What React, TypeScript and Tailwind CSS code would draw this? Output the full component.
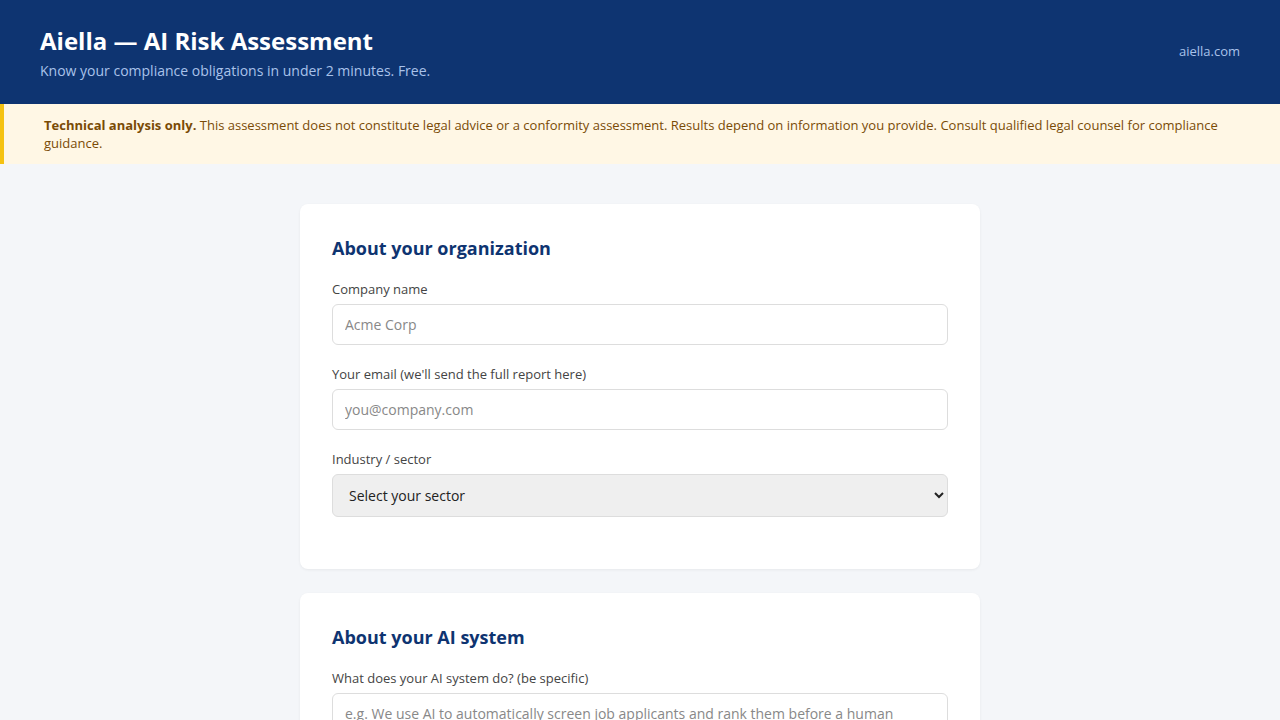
export default function App() {
  return (
    <div className="min-h-screen bg-[#f4f6f9] font-['Open_Sans',sans-serif]">
      <header className="flex items-center justify-between bg-[#0e3471] px-10 h-[104px]">
        <div className="pt-[2px]">
          <h1 className="text-[24px] font-bold leading-8 text-white">Aiella — AI Risk Assessment</h1>
          <p className="mt-1 text-[14px] leading-5 text-[#a9c2ea]">
            Know your compliance obligations in under 2 minutes. Free.
          </p>
        </div>
        <span className="text-[13px] text-[#a9c2ea]">aiella.com</span>
      </header>

      <div className="border-l-4 border-[#f5c211] bg-[#fff7e5] px-10 py-3 text-[13px] leading-[18px] text-[#7a4b06]">
        <strong className="font-bold">Technical analysis only.</strong> This assessment does not constitute legal
        advice or a conformity assessment. Results depend on information you provide. Consult qualified legal counsel
        for compliance guidance.
      </div>

      <main className="mx-auto w-[680px] pt-10 pb-10 space-y-6">
        <section className="rounded-lg bg-white p-8 shadow-[0_1px_3px_rgba(0,0,0,0.06)]">
          <h2 className="mb-5 text-[18px] font-bold leading-6 text-[#0e3471]">About your organization</h2>

          <div className="mb-5">
            <label className="mb-1.5 block text-[13px] leading-[18px] text-[#444]">Company name</label>
            <input
              className="block h-[41px] w-full rounded-md border border-[#dddddd] bg-white px-3 text-[14px] text-[#222] placeholder:text-[#888] outline-none"
              placeholder="Acme Corp"
            />
          </div>

          <div className="mb-5">
            <label className="mb-1.5 block text-[13px] leading-[18px] text-[#444]">
              Your email (we'll send the full report here)
            </label>
            <input
              className="block h-[41px] w-full rounded-md border border-[#dddddd] bg-white px-3 text-[14px] text-[#222] placeholder:text-[#888] outline-none"
              placeholder="you@company.com"
            />
          </div>

          <div className="mb-5">
            <label className="mb-1.5 block text-[13px] leading-[18px] text-[#444]">Industry / sector</label>
            <select className="block h-[43px] w-full rounded-md border border-[#dddddd] bg-[#efefef] px-3 text-[14px] text-[#222] outline-none">
              <option>Select your sector</option>
            </select>
          </div>
        </section>

        <section className="rounded-lg bg-white p-8 shadow-[0_1px_3px_rgba(0,0,0,0.06)]">
          <h2 className="mb-5 text-[18px] font-bold leading-6 text-[#0e3471]">About your AI system</h2>
          <div className="mb-5">
            <label className="mb-1.5 block text-[13px] leading-[18px] text-[#444]">
              What does your AI system do? (be specific)
            </label>
            <textarea
              rows={4}
              className="block w-full resize-y rounded-md border border-[#dddddd] bg-white px-3 py-[10px] text-[14px] leading-5 text-[#222] placeholder:text-[#888] outline-none"
              placeholder="e.g. We use AI to automatically screen job applicants and rank them before a human recruiter reviews them."
            />
          </div>
        </section>
      </main>
    </div>
  );
}
